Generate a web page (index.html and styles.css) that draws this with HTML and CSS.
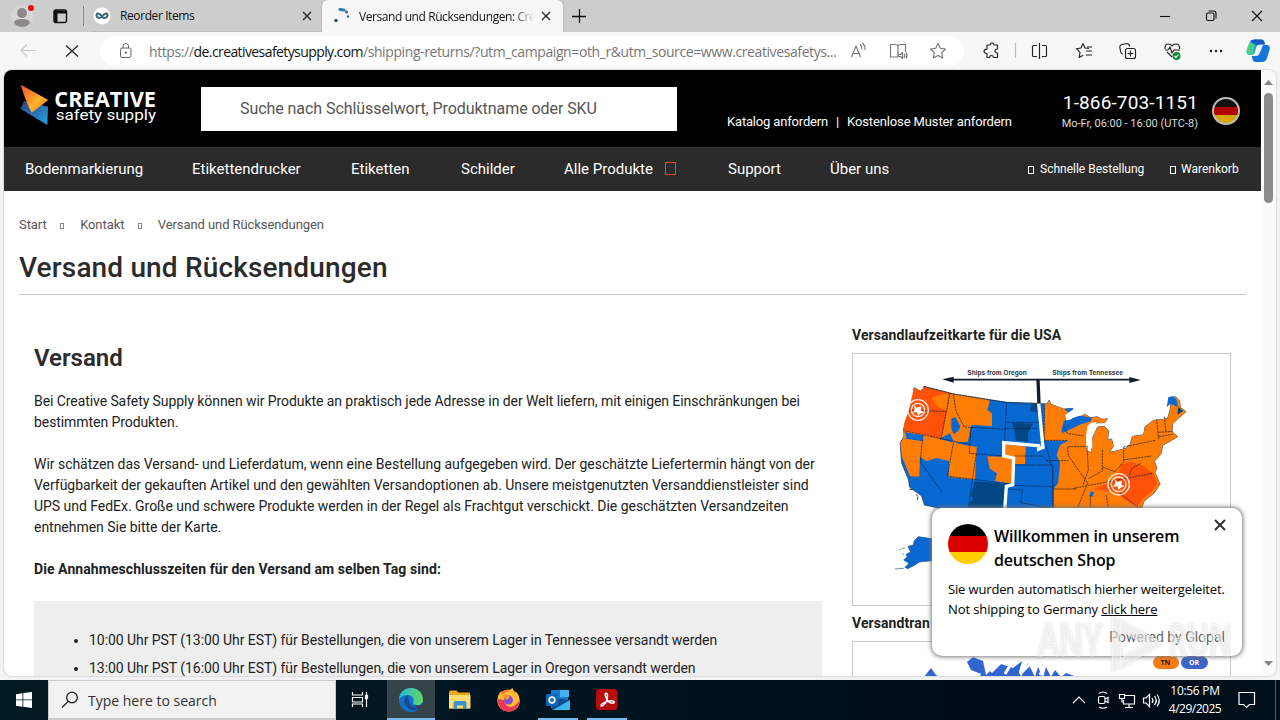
FILE: index.html
```html
<!DOCTYPE html>
<html lang="de">
<head>
<meta charset="utf-8">
<title>Versand und Rücksendungen</title>
<link rel="stylesheet" href="styles.css">
</head>
<body>
<div class="tabstrip">
  <svg class="strip-icons" width="92" height="32" viewBox="0 0 92 32">
    <circle cx="22" cy="16" r="11" fill="#d8d4d2"/>
    <circle cx="22" cy="13" r="5" fill="#8c8a89"/>
    <path d="M14 23q0-4 8-4t8 4q-3 4-8 4t-8-4z" fill="#8c8a89"/>
    <circle cx="31" cy="8" r="3" fill="#e00b1c"/>
    <rect x="54" y="10" width="12.500" height="12.500" rx="2" fill="none" stroke="#111" stroke-width="1.400"/>
    <path d="M54 10.500h12.500v3H57.500v9H54z" fill="#111"/>
    <path d="M83.500 6v20" stroke="#8b8b8b"/>
  </svg>
  <div class="tab tab-idle">
    <svg width="18" height="18" viewBox="0 0 18 18"><circle cx="9" cy="9" r="8.500" fill="#fff"/><path d="M9 9.500C7.500 7 3.500 5 3.500 8S7 12 9 9.500s5.500-4.500 5.500-1.500S10.500 12 9 9.500z" fill="none" stroke="#386575" stroke-width="2"/></svg>
    <span class="tab-title t-reorder">Reorder Items</span>
    <svg class="x" width="10" height="10" viewBox="0 0 10 10"><path d="M1 1l8 8M9 1L1 9" stroke="#222" stroke-width="1.300"/></svg>
  </div>
  <div class="tab tab-active">
    <svg width="18" height="18" viewBox="0 0 18 18"><path d="M7 2.500l4 .5" stroke="#2e7cab" stroke-width="3" stroke-linecap="round"/><circle cx="13.500" cy="5" r="1.500" fill="#2c5f8a"/><circle cx="15" cy="9.500" r="1.200" fill="#2c6d96"/><circle cx="3" cy="13.500" r="1.700" fill="#1f4f75"/></svg>
    <span class="tab-title t-versand">Versand und Rücksendungen: Cre</span>
    <svg class="x" width="10" height="10" viewBox="0 0 10 10"><path d="M1 1l8 8M9 1L1 9" stroke="#222" stroke-width="1.300"/></svg>
  </div>
  <svg class="plus" width="16" height="16" viewBox="0 0 16 16"><path d="M8.500 1v14M1 8.500h14" stroke="#111" stroke-width="1.300"/></svg>
  <svg class="winctl" width="112" height="32" viewBox="1152 0 112 32" fill="none" stroke="#111" stroke-width="1.100">
    <path d="M1160 16.500h10"/><rect x="1206.500" y="13" width="7.500" height="7.500" rx="1.500"/><path d="M1208.500 11h5q2.500 0 2.500 2.500v5"/><path d="M1252 11l10 10M1262 11l-10 10"/>
  </svg>
</div>

<div class="toolbar">
  <svg width="100" height="38" viewBox="0 32 100 38" fill="none"><path d="M36 50.500H21M27 44.500l-6 6 6 6" stroke="#c9c9c9" stroke-width="1.200"/><path d="M66 45.500l12 11M78 45.500l-12 11" stroke="#222" stroke-width="1.300"/></svg>
  <div class="address">
    <svg width="14" height="18" viewBox="0 0 14 18" fill="none" stroke="#666"><rect x="1.500" y="6" width="10.500" height="9.500" rx="1.500"/><path d="M4 6V4q0-2.500 2.700-2.500T9.500 4v2"/><circle cx="6.800" cy="10.800" r=".7" fill="#666"/></svg>
    <span class="url">https://<b>de.creativesafetysupply.com</b>/shipping-returns/?utm_campaign=oth_r&amp;utm_source=www.creativesafetys...</span>
  </div>
  <svg class="toolicons" width="430" height="38" viewBox="850 32 430 38" fill="none" stroke="#222" stroke-width="1.150" stroke-linejoin="round">
    <g stroke="#777"><path d="M851.500 57l4.500-11 4.500 11M853 53.500h6M860 44q2 2 1.500 5M862.500 43q3 3 2.500 7"/>
    <path d="M898 57h-7.500V44.500h5q2.500 0 2.500 2v10.500M898 46.500q0-2 2.500-2h5V52"/><path d="M898.500 54.500h2l2-2v6l-2-2h-2zM904 53.500q1.500 2 0 4.500M906 52.500q2 3 0 6"/>
    <path d="M938 43.500l2.300 4.800 5.200.7-3.800 3.700.9 5.300-4.600-2.500-4.600 2.500.9-5.300-3.800-3.700 5.200-.7z"/></g>
    <path d="M987 45h3q.3-2 2-2t2 2h3.500v4q-2.500.2-2.500 2t2.500 2v4.500H993.500q-.3-2-2-2t-2 2H987v-4q-3-.2-3-2.200t3-2.200z"/>
    <path d="M1015.500 43v15" stroke="#bbb"/>
    <path d="M1037 45.500h-3.500q-1 0-1 1v9q0 1 1 1h3.500M1042 45.500h3.500q1 0 1 1v9q0 1-1 1H1042M1039.500 43v16"/>
    <path d="M1083 43.500l2 4.500 4 .5M1083 43.500l-2 4.500-4.500.7 3.500 3.600-.8 5.200 4-2.300M1086 51h6M1086 55h6M1087 47h5"/>
    <path d="M1123 54q-2 0-2.500-3l-.7-4q0-2 2-2.500l5-1q2.500 0 3 3"/><rect x="1125.500" y="48.500" width="10" height="10" rx="2"/><path d="M1130.500 50.500v6M1127.500 53.500h6"/>
    <path d="M1165 50h3l2-3 2 6 2-3h6M1165 49q-.5-5 3.500-5 2.500 0 3.500 2 1-2 4-2 4 0 3.500 5M1167 52l5 5"/><circle cx="1176.500" cy="56" r="4" fill="#138a36" stroke="none"/><path d="M1174.500 56l1.500 1.500 2.500-3" stroke="#fff"/>
    <g fill="#222" stroke="none"><circle cx="1211" cy="51" r="1.200"/><circle cx="1216" cy="51" r="1.200"/><circle cx="1221" cy="51" r="1.200"/></g>
    <g stroke="none"><path d="M1250 42q2-2.500 5-2.500h6q3 0 3.500 3l.5 2h-5q-3 0-4 3.500l-1 4q-1 3-4 3-5 0-4.500-4z" fill="#18a7cf"/><path d="M1246.500 51q1-5 3.500-9l5 3-2 8q-1 2-3 2-3.500 0-3.500-4z" fill="#48cf8d"/><path d="M1263 45h3q5 0 3.500 5l-2.500 8q-1 4-5 4h-6q-3 0-3.500-3l-.7-3h4q3 0 4-3z" fill="#1473dc"/><path d="M1250 41q2-2 5-1.500h6q3 0 3.500 3l.5 2h-5l-4 .5z" fill="#185bc5"/></g>
  </svg>
</div>

<div class="viewport">
  <div class="frame">
    <div class="page">
      <header class="shop-head">
        <svg class="logo" width="140" height="46" viewBox="60 240 420 138">
          <defs><linearGradient id="flame" x1="0" y1="0" x2="1" y2="1"><stop offset="0" stop-color="#f0522c"/><stop offset=".6" stop-color="#fdb32c"/><stop offset="1" stop-color="#e87422"/></linearGradient><linearGradient id="sea" x1="0" y1="0" x2="1" y2="1"><stop offset="0" stop-color="#343d82"/><stop offset="1" stop-color="#21a4df"/></linearGradient></defs>
          <path d="M72 303l-10 24 80 48 2-55z" fill="url(#sea)"/><path d="M62 254l83 46-50 38q-18-34-33-84z" fill="url(#flame)"/>
          <text class="logo-a" x="163" y="321" textLength="305" lengthAdjust="spacingAndGlyphs">CREATIVE</text>
          <text class="logo-b" x="167" y="360" textLength="301" lengthAdjust="spacingAndGlyphs">safety supply</text>
        </svg>
        <div class="search">Suche nach Schlüsselwort, Produktname oder SKU</div>
        <div class="head-links"><span class="katalog">Katalog anfordern</span><i>|</i><span class="muster">Kostenlose Muster anfordern</span></div>
        <div class="phone"><strong>1-866-703-1151</strong><span>Mo-Fr, 06:00 - 16:00 (UTC-8)</span></div>
        <div class="flag flag-small"></div>
      </header>
      <nav class="shop-nav">
        <span>Bodenmarkierung</span><span>Etikettendrucker</span><span>Etiketten</span><span>Schilder</span><span class="all">Alle Produkte<i class="box box-red"></i></span><span>Support</span><span>Über uns</span>
        <span class="quick"><i class="box"></i>Schnelle Bestellung</span><span class="quick cart"><i class="box"></i>Warenkorb</span>
      </nav>
      <div class="crumbs"><span>Start</span><i class="box"></i><span>Kontakt</span><i class="box"></i><span>Versand und Rücksendungen</span></div>
      <h1>Versand und Rücksendungen</h1>
      <div class="columns">
        <main>
          <h2>Versand</h2>
          <p class="l1">Bei Creative Safety Supply können wir Produkte an praktisch jede Adresse in der Welt liefern, mit einigen Einschränkungen bei<br>bestimmten Produkten.</p>
          <p class="l2">Wir schätzen das Versand- und Lieferdatum, wenn eine Bestellung aufgegeben wird. Der geschätzte Liefertermin hängt von der<br>Verfügbarkeit der gekauften Artikel und den gewählten Versandoptionen ab. Unsere meistgenutzten Versanddienstleister sind<br>UPS und FedEx. Große und schwere Produkte werden in der Regel als Frachtgut verschickt. Die geschätzten Versandzeiten<br>entnehmen Sie bitte der Karte.</p>
          <p class="strong">Die Annahmeschlusszeiten für den Versand am selben Tag sind:</p>
          <ul><li>10:00 Uhr PST (13:00 Uhr EST) für Bestellungen, die von unserem Lager in Tennessee versandt werden</li><li>13:00 Uhr PST (16:00 Uhr EST) für Bestellungen, die von unserem Lager in Oregon versandt werden</li></ul>
        </main>
        <aside>
          <h3>Versandlaufzeitkarte für die USA</h3>
          <svg class="map" width="379" height="253" viewBox="36 99 1137 759">
            <defs>
              <path id="usa" d="M222 203l18 10 8 4 4-18 90 23 108 17 50 8 98 4 24 0 5-10 6 12 38 14 28-2-25 22 5 20 25-8 30-16 18 10 20-3 16 8 14-2-8 12-25 1-12 12-12 17-5 55 15 5 3-45 15-32 20-2 13 14-3 26 12-2 5 22-11 17 15-2 34-9 13-14 6-22 34-5 4-24 26-19 28-3 14-3 8-30 2-30 14-5 11 12 4 21 16 12-25 22-15 14-2 24 17 15-20 12-25 14-5 26-9 10-11 12 8 20-6 13 15 36-18 26-30 25-12 35H330l-40-16-37-8-8-27-36-26-4-24-20-48-5-60 12-22-1-24 17-44 12-32z"/>
              <clipPath id="east"><path d="M614 230H1050V580H640V507L654 490 660 430 650 405 660 375 685 362H612z"/></clipPath>
            </defs>
            <text class="map-label" x="382" y="164" textLength="178" lengthAdjust="spacingAndGlyphs">Ships from Oregon</text>
            <text class="map-label" x="637" y="164" textLength="212" lengthAdjust="spacingAndGlyphs">Ships from Tennessee</text>
            <use href="#usa" fill="#0868d1" stroke="#173351" stroke-width="2"/>
            <use href="#usa" fill="#ff7c05" clip-path="url(#east)"/>
            <g fill="#ff7c05">
              <path d="M252 200l88 22 110 18-8 30 14 10v38l-61-3-12 50-40 3-13-28-35 18-103-22 0-22 12-35 15-39 3-35 23 12z"/>
              <path d="M190 332l8 10 53 4 105 25 54 10-5 98-80-8 2-47-33-8-27 14-27-20-2 60-28-1-24-58-5-40 10-20z"/>
              <path d="M442 409l76 3-5 78-48-6 6-24-22-14z"/>
              <path d="M490 371l67 9-2 52h-33v-24h-32z"/>
            </g>
            <path d="M392 322l100 5-6 79-68-6q-2-34-20-52l-10-6z" fill="#0868d1"/>
            <g fill="#ff5208"><path d="M222 203l18 10 12-13 76 19-7 52-17 87-113-28 2-22 12-33z"/><path d="M845 433l30-8 40 14 13 15 10 2 14 34-20 27-28 23-12 20-42-24-20-20-70-8 65-28z"/></g>
            <path d="M275 232l48-12-3 52-20-8-18-14z" fill="#ff7c05"/>
            <path d="M334 326v-30l12-5 15 28-5 13-15 11zM197 338l54 8-3 18-49-8zM245 428l45-14 37 10-4 46-20 40zM980 262l5-30 15-4 10 12 4 21-14-6-10-3zM664 330l8-28 18-3 22-14 44 9-4 10-33 10-52 26zM672 268l20-4 12 4-14 12zM752 514l10 3-4 13-10-2z" fill="#0868d1"/>
            <path d="M404 484l96 8-5 78H386l4-25 9-8-6-12zM517 308l62 3-14 27-1 28-36-5zM572 251h25v27l-27-5zM1014 261l16 12-18 11z" fill="#024784"/>
            <path d="M742 318l12-10 16-2-14 30 1 44-8 12-10-8-1-34z" fill="#fff"/>
            <g fill="none" stroke="#0b1c35" stroke-width="2" stroke-dasharray="7 2">
              <path d="M252 200l88 22 110 18 48 7 99 3M330 219l-10 52-18 89M207 272l113 2M190 332l200 42 3-53M340 222l8 52 25 47 127 7M500 247l-8 143M500 307h104M495 325h99M390 372l-2 28 107 8M247 359l-6 66 66 93M340 370l-18 98 186 24M409 401l-24 162M525 408h83l31 30v127M522 435h111M512 496l126 4M497 507l50 3-5 38 90 16M612 361h70M613 255v105l24 84 3 121M618 422h67M745 380h-62l2 27 58 82-30 74M741 382l4 68-16 45M787 389v64l-42 23M851 380v46l-26 29-38-14M851 381l95-20M850 420l84-12M700 505l238-45M840 520l58 45M798 525l8 40M751 526v39M640 507h70M950 297l6 60M973 290l4 43M956 337l42-3M956 350l42-7M868 466l8-22 28-14M672 320l10 20 50 8"/>
            </g>
            <path d="M596 250l13 132-13 5v-10l-105-9v40l30 6-3 80-19 5-5 72" fill="none" stroke="#fff" stroke-width="10"/>
            <path d="M676 284l24-16 22 0-27 9-12 10 35-9 14 5-36 12-15 0z" fill="#fff"/>
            <path d="M594 179l3 71" stroke="#101c28" stroke-width="10"/><path d="M330 179h550" stroke="#101c28" stroke-width="5"/><path d="M307 178l34-8v18zM902 180l-34-9v18z" fill="#101c28"/>
            <g fill="none" stroke="#fff" stroke-width="4" opacity=".85"><circle cx="234" cy="270" r="31"/><circle cx="234" cy="270" r="20"/><circle cx="836" cy="493" r="32"/><circle cx="836" cy="493" r="22"/></g>
            <path d="M222 255l8 8 14-4-2 12 10 6-12 4-6 7-4-12-13 2 7-9zM824 478l9 8 13-4-2 12 10 5-12 4-6 7-4-11-14 1 8-9z" fill="#fff"/>
            <path d="M208 508l12 1M229 523l4 6M232 540l2-10" stroke="#345" stroke-width="3"/>
            <path d="M235 650l12 2 30 4v66l-38 4-20 12-16 8-8-4 12-12-16-10 11-10-4-7 14-7-8-17 15-3 4-14zM177 688l5 1M185 685l10-1M165 747l26-2M188 700l3 5" fill="#0868d1" stroke="#235176" stroke-width="2"/>
          </svg>
          <h3 class="second">Versandtran</h3>
          <svg class="map map-two" width="379" height="60" viewBox="852 641 379 60"><path d="M924 677l7-9 5 7 4 2zM967 662l6-5 10 4 3 14 6-6 9-5 12 4 9-7-5 18h-38l2-5-10-4z" fill="#3165cf"/><path d="M993 676l8-9 7-1-5 12 14-12 4 11 7-14 7 14 3-10 5 11 3-11 5 10 4-7 6 7 5-4 14 5z" fill="#3165cf"/><path d="M1000 663l-9 9M1012 662l-7 12M1030 664l-10 10M1045 665l-5 10" stroke="#fff" stroke-width="3"/><rect x="1153" y="656" width="26" height="13" rx="6.500" fill="#fa7c11"/><rect x="1181" y="656" width="27" height="13" rx="6.500" fill="#3b65c6"/><text class="pin" x="1160.500" y="665" fill="#222">TN</text><text class="pin" x="1189" y="665" fill="#fff">OR</text></svg>
        </aside>
      </div>
    </div>
    <div class="scrollbar"><svg width="15" height="606" viewBox="0 0 15 606"><path d="M3 15l4.500-5 4.500 5z" fill="#858585"/><rect x="3" y="23" width="9" height="110" rx="4.500" fill="#8b8b8b"/><path d="M3 591l4.500 5 4.500-5z" fill="#858585"/></svg></div>
  </div>
  <div class="popup">
    <svg class="close" width="12" height="12" viewBox="0 0 12 12"><path d="M1 1l10 10M11 1L1 11" stroke="#333" stroke-width="2"/></svg>
    <div class="popup-head"><div class="flag"></div><div class="popup-title"><span>Willkommen in unserem</span><br>deutschen Shop</div></div>
    <div class="popup-text"><span class="auto">Sie wurden automatisch hierher weitergeleitet.</span><br>Not shipping to Germany <u>click here</u></div>
    <div class="powered">Powered by Glopal</div>
  </div>
  <svg class="watermark" width="204" height="60" viewBox="1034 614 204 60">
    <g class="wm"><text x="1038" y="656" textLength="64" lengthAdjust="spacingAndGlyphs">ANY</text><text x="1168" y="656" textLength="64" lengthAdjust="spacingAndGlyphs">RUN</text>
    <path d="M1112 616l9 5v45l-9 5zM1121 621l42 22-43 26v-10l25-15-24-13z"/></g>
  </svg>
</div>

<footer class="taskbar">
  <div class="start"><svg width="16" height="16" viewBox="0 0 16 16"><path d="M0 2.200l6.500-1v6.300H0zM7.300 1L16 0v7.500H7.300zM0 8.300h6.500v6.400L0 13.700zM7.300 8.300H16V16l-8.700-1.200z" fill="#fff"/></svg></div>
  <div class="tasksearch"><svg width="18" height="18" viewBox="0 0 18 18" fill="none" stroke="#222" stroke-width="1.300"><circle cx="11" cy="6.500" r="5.300"/><path d="M7 10.500l-6 6"/></svg><span>Type here to search</span></div>
  <svg class="apps" width="294" height="40" viewBox="336 680 294 40">
    <g fill="none" stroke="#fff" stroke-width="1.200"><path d="M352.500 692v3h10v-3M352.500 707v-3h10v3M352.500 697.500h10v4.500h-10zM366.500 692v15"/><path d="M365.500 695.500h2v3h-2z" fill="#fff"/></g>
    <rect x="387" y="680" width="48" height="38" fill="#35444a"/><path d="M387 719h48M538 719h40M587 719h40" stroke="#76b9ed" stroke-width="2"/>
    <defs><linearGradient id="edge"><stop stop-color="#23b8df"/><stop offset="1" stop-color="#68d65b"/></linearGradient></defs>
    <circle cx="411" cy="700" r="12" fill="#0c72c9"/><path d="M399 700c0-16 24-16 24 0 0 6-10 7-10 3 2-4-1-8-5-8-4 0-8 2-9 5z" fill="url(#edge)"/><path d="M408 695c-7 4-4 13 4 15 4 1 7-1 9-3-5 1-11 0-12-6z" fill="#164d91"/><path d="M413.500 703c1.500 2.500 6 3 9 1.500-1 3-3 5-4 5.500z" fill="#35444a"/>
    <path d="M449 692q0-1.500 1.500-1.500h6l2 2H470v16h-21z" fill="#e8a817"/><path d="M449 695h21.500v13.500H449z" fill="#ffdc74"/><path d="M453.500 709v-6q0-2 2-2h9q2 0 2 2v6h-3.500v-3.500h-6v3.500z" fill="#3d94cd"/>
    <circle cx="508.500" cy="700.500" r="11" fill="#ff7831"/><path d="M497.500 701q0-7 4-10v4l4-2 7-5 2 5 2-1q4 5 3 11-2 8-10 8.500-11 0-12-10.500z" fill="#ffba2e"/><path d="M498 699q-1 12 10.500 12.500Q519 711 519.500 700q-4 7-9 7-6-1-6-7z" fill="#ee3658"/><circle cx="508.500" cy="700" r="4.500" fill="#8350cd"/><path d="M502 696q4-3 8 1l-3 3z" fill="#ff9231"/>
    <path d="M551 690h17v18h-17z" fill="#1679c7"/><path d="M560 690h9v7h-9z" fill="#42b5ee"/><path d="M552 698l18 2v10h-18z" fill="#0e4e91"/><path d="M553 710l17-10v10z" fill="#38b8ef"/><rect x="546" y="694" width="12" height="12" rx="1" fill="#0968b9"/><circle cx="552" cy="700" r="2.800" fill="none" stroke="#fff" stroke-width="1.700"/>
    <rect x="596" y="689" width="21.500" height="21" rx="3.500" fill="#b70c0c"/><path d="M601 706c4 0 7-7 6.500-11-.5-3-3-2-2 1 1 4 4 8 8 7 2-1 0-3-4-2-5 1-9 3-8.500 5z" fill="none" stroke="#fff" stroke-width="1.500"/>
  </svg>
  <svg class="tray" width="100" height="40" viewBox="1066 680 100 40" fill="none" stroke="#fff" stroke-width="1.200">
    <path d="M1073 703l6-6 6 6"/><rect x="1098.500" y="696.500" width="6.500" height="7" rx="1.500"/><path d="M1105 699l3-1.500v5l-3-1.500M1099 693.500q4-3 8 0M1099 707q4 2.500 8 0"/><path d="M1124 695.500h10.500v8.500h-11v-4M1129 704v3.500M1125 707.500h8M1119.500 694.500h5v4h-5zM1122 698.500v4"/><path d="M1143.500 698h2.500l3.500-3.500v12L1146 703h-2.500zM1152 698q2 2.500 0 5M1154.500 696q3.500 4.500 0 9M1157 694.500q4.500 6 0 12"/>
  </svg>
  <div class="clock"><span>10:56 PM</span><span class="date">4/29/2025</span></div>
  <svg class="note" width="18" height="18" viewBox="0 0 18 18" fill="none" stroke="#fff" stroke-width="1.200"><path d="M1 1.500h15.500v12H11.500l-3 3-3-3H1z"/></svg>
  <i class="peek"></i>
</footer>
</body>
</html>
```
FILE: styles.css
```css
* { box-sizing: border-box; }
body { margin: 0; width: 1280px; height: 720px; overflow: hidden; display: flex; flex-direction: column; background: #f7f7f7; font-family: "Open Sans", "Noto Sans", sans-serif; color: #222; white-space: nowrap; }
svg { display: block; flex: none; }
i { font-style: normal; }

.tabstrip { height: 32px; flex: none; display: flex; background: #cdcdcd; }
.tab { display: flex; align-items: center; font-size: 12px; color: #111; }
.tab-idle { width: 230px; padding-left: 1px; border-bottom: 1px solid #bdbdbd; }
.tab-active { width: 241px; padding-left: 11px; background: #f7f7f7; border-radius: 6px 6px 0 0; box-shadow: 0 0 2px #999; }
.tab-title { margin-left: 9px; letter-spacing: -.4px; }
.t-reorder { width: 178px; }
.t-versand { width: 174px; margin-left: 8px; letter-spacing: -.42px; -webkit-mask-image: linear-gradient(90deg, #000 154px, transparent 176px); }
.x { margin-left: 4px; }
.tab-active .x { margin-left: 8px; }
.plus { margin: 8px 0 0 8px; }
.winctl { margin-left: auto; margin-right: 16px; }

.toolbar { height: 38px; flex: none; display: flex; background: #f7f7f7; }
.address { width: 864px; height: 30px; margin-top: 4px; padding-left: 19px; display: flex; align-items: center; border-radius: 15px; background: #fff; }
.url { margin-left: 16px; font-size: 14px; color: #767676; letter-spacing: -.4px; }
.url b { font-weight: 400; color: #111; letter-spacing: -.59px; }
.toolicons { margin-left: -114px; }

.viewport { height: 610px; flex: none; padding: 0 4px 4px; position: relative; background: #f3f3f5; }
.frame { width: 1272px; height: 606px; display: flex; overflow: hidden; border-radius: 8px; background: #fff; box-shadow: 0 0 2px #aaa; font-family: Roboto, sans-serif; }
.page { width: 1257px; flex: none; }
.scrollbar { width: 15px; background: #fafafa; }

.shop-head { height: 77px; display: flex; background: #000; color: #fff; }
.logo { margin: 10px 0 0 16px; }
.logo-a { font: 700 62px "Open Sans", sans-serif; fill: #fff; }
.logo-b { font: 400 46px Roboto, sans-serif; fill: #fff; }
.search { width: 476px; height: 44px; margin: 17px 0 0 41px; padding-left: 39px; background: #fff; color: #555; font-size: 16px; line-height: 43px; letter-spacing: -.065px; }
.head-links { width: 286px; margin: 43px 0 0 50px; font-size: 13px; line-height: 18px; display: flex; }
.head-links i { width: 19px; text-align: center; }
.katalog { letter-spacing: -.17px; }
.muster { letter-spacing: -.12px; }
.phone { width: 137px; margin: 21px 0 0 48px; display: flex; flex-direction: column; align-items: flex-end; }
.phone strong { font-weight: 400; font-size: 19px; line-height: 23px; letter-spacing: .14px; }
.phone span { font-size: 11px; line-height: 19px; color: #ddd; }
.flag { width: 40px; height: 40px; border-radius: 50%; background: linear-gradient(#000 30%, #d00 30% 70%, #fc0 70%); flex: none; }
.flag-small { width: 28px; height: 28px; margin: 27px 0 0 14px; border: 2px solid #bbb; background: linear-gradient(#111 33%, #b00000 33% 68%, #d5a60a 68%); }

.shop-nav { height: 44px; padding: 0 0 2px 21px; display: grid; grid-template-columns: 167px 159px 110px 103px 164px 102px 198px 142px 80px; align-items: center; background: #2b2b2b; color: #fff; font-size: 15px; border-top: 1px solid #333; }
.box { display: inline-block; width: 5px; height: 7px; border: 1px solid currentColor; }
.all { display: flex; align-items: center; }
.box-red { width: 11px; height: 13px; margin-left: 12px; border-color: #e84a22; }
.quick { font-size: 12px; }
.quick .box { width: 6px; height: 8px; margin-right: 6px; vertical-align: -1px; }
.cart .box { margin-right: 5px; }

.crumbs { height: 38px; padding: 24px 0 0 15px; display: flex; align-items: flex-start; font-size: 13px; line-height: 20px; color: #555; letter-spacing: -.08px; }
.crumbs .box { width: 4px; height: 6px; margin: 8px 16px 0 13.500px; border-color: #888; }
h1 { height: 66px; margin: 0 15px 0 15px; border-bottom: 1px solid #c5c5c5; font-size: 28px; font-weight: 500; line-height: 77px; letter-spacing: .15px; color: #2b2b2b; }
.columns { display: flex; padding-left: 30px; }
main { width: 788px; margin-right: 30px; }
h2 { margin: 48px 0 0; font-size: 24px; line-height: 30px; font-weight: 600; color: #2b2b2b; }
p { margin: 0; padding-top: 18px; font-size: 14px; line-height: 21px; }
.l1 { letter-spacing: -.075px; }
.l2, .strong { padding-top: 21px; }
.l2 { letter-spacing: -.028px; }
.strong { font-weight: 700; letter-spacing: .07px; }
ul { height: 130px; margin: 21px 0 0; padding: 25px 0 0 55px; background: #eee; font-size: 14px; line-height: 28px; letter-spacing: -.055px; }
aside { width: 379px; }
h3 { margin: 29px 0 0; height: 29px; font-size: 14px; line-height: 22px; font-weight: 700; letter-spacing: .08px; }
h3.second { margin-top: 6px; }
.map { outline: 1px solid #c9c9c9; outline-offset: -1px; }
.map-label { font: 700 20px "Liberation Sans", sans-serif; fill: #26303a; }
.pin { font: 700 7px "Open Sans", sans-serif; }

.popup { position: absolute; left: 932px; top: 438px; width: 310px; height: 148px; padding: 16px; border-radius: 10px; background: #fff; box-shadow: 0 0 4px 1px #777; color: #000; }
.close { position: absolute; right: 16px; top: 11px; }
.popup-head { display: flex; gap: 6px; }
.popup-title { font-size: 16px; font-weight: 600; line-height: 24px; letter-spacing: -.18px; }
.popup-text { margin-top: 7px; font-size: 13px; line-height: 20px; letter-spacing: -.1px; }
.auto { letter-spacing: -.15px; }
.powered { margin: 8px 1px 0 0; text-align: right; font: 14px/20px Roboto, sans-serif; color: #666; }
.watermark { position: absolute; left: 1034px; top: 544px; filter: drop-shadow(0 0 1px rgba(0, 0, 0, .25)); }
.wm { fill: #fff; fill-opacity: .55; stroke: #fff; stroke-opacity: .6; stroke-width: 1; font: 600 46px "Open Sans", sans-serif; }

.taskbar { height: 40px; flex: none; display: flex; color: #fff; background: linear-gradient(90deg, #001820 0%, #001420 50%, #000a18 80%, #00101a 100%); }
.start { width: 48px; padding: 12px 0 0 16px; }
.tasksearch { width: 288px; display: flex; align-items: center; padding-left: 12px; background: #f2f2f2; border: 1px solid #ccc; border-width: 1px 1px 2px; color: #333; font-size: 14px; }
.tasksearch span { margin: 2px 0 0 9px; }
.tray { margin-left: 436px; }
.clock { width: 58px; display: flex; flex-direction: column; align-items: center; font-size: 12px; line-height: 18px; padding-top: 2px; letter-spacing: -.3px; }
.date { letter-spacing: -.5px; }
.note { margin: 11px 0 0 14px; }
.peek { width: 1px; margin-left: 19px; background: #556; }
```
